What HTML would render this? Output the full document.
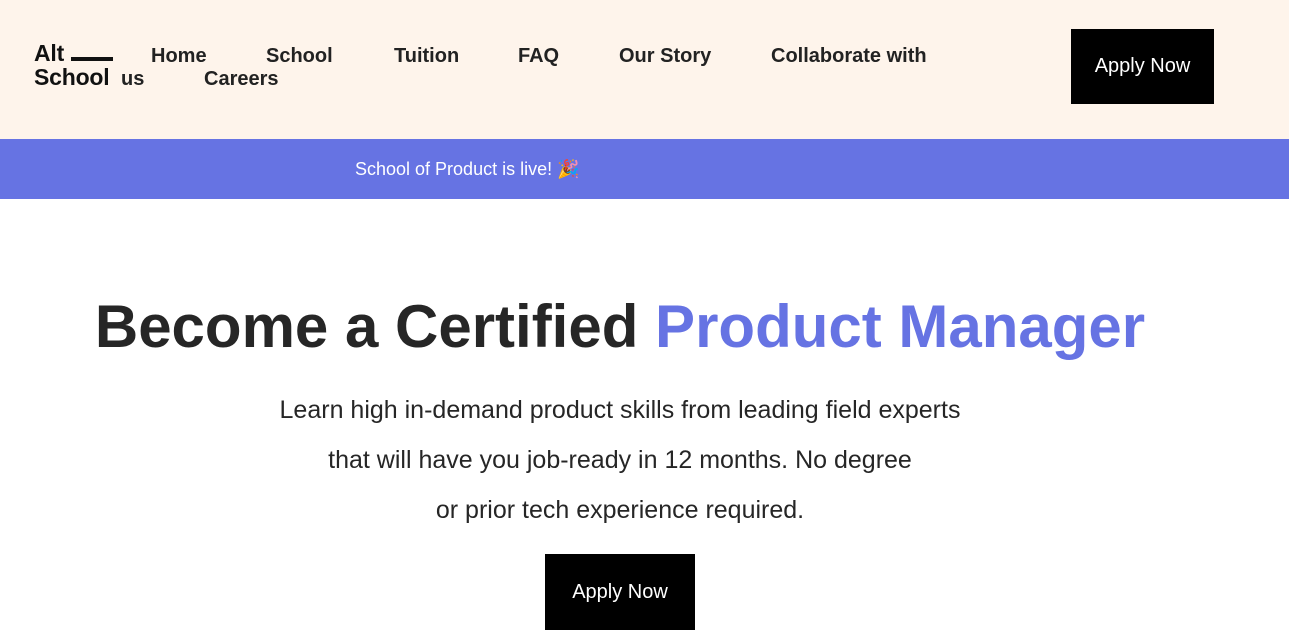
<!DOCTYPE html>
<html><head><meta charset="utf-8"><style>
*{margin:0;padding:0;box-sizing:border-box}
body{width:1289px;height:619px;overflow:hidden;background:#fff;font-family:"Liberation Sans",Arial,sans-serif;position:relative}
.hdr{position:absolute;left:0;top:0;width:1289px;height:139px;background:#fef4eb}
.logo{position:absolute;left:34px;top:41px;font-size:23px;font-weight:bold;line-height:24px;color:#111;letter-spacing:-0.2px}
.logo .bar{position:absolute;left:37px;top:16px;width:42px;height:4px;background:#111}
.nav{position:absolute;font-size:20px;font-weight:bold;color:#222}
.btn{position:absolute;background:#000;color:#fff;font-size:20px;display:flex;align-items:center;justify-content:center}
.ban{position:absolute;left:0;top:139px;width:1289px;height:60px;background:#6673e3;color:#fff;font-size:18px}
h1{position:absolute;left:0;width:1240px;text-align:center;top:292px;font-size:60px;font-weight:bold;color:#262626}
h1 span{color:#6673e3}
.p{position:absolute;left:0;width:1240px;text-align:center;font-size:25px;color:#262626}
</style></head><body>
<div class="hdr">
<div class="logo">Alt<br>School<div class="bar"></div></div>
<div class="nav" style="left:151px;top:45px">Home</div>
<div class="nav" style="left:266px;top:45px">School</div>
<div class="nav" style="left:394px;top:45px">Tuition</div>
<div class="nav" style="left:518px;top:45px">FAQ</div>
<div class="nav" style="left:619px;top:45px">Our Story</div>
<div class="nav" style="left:771px;top:45px">Collaborate with</div>
<div class="nav" style="left:121px;top:68px">us</div>
<div class="nav" style="left:204px;top:68px">Careers</div>
<div class="btn" style="left:1071px;top:29px;width:143px;height:75px">Apply Now</div>
</div>
<div class="ban"><span style="position:absolute;left:355px;top:20px">School of Product is live! 🎉</span></div>
<h1>Become a Certified <span>Product Manager</span></h1>
<div class="p" style="top:396px">Learn high in-demand product skills from leading field experts</div>
<div class="p" style="top:446px">that will have you job-ready in 12 months. No degree</div>
<div class="p" style="top:496px">or prior tech experience required.</div>
<div class="btn" style="left:545px;top:554px;width:150px;height:76px">Apply Now</div>
</body></html>
